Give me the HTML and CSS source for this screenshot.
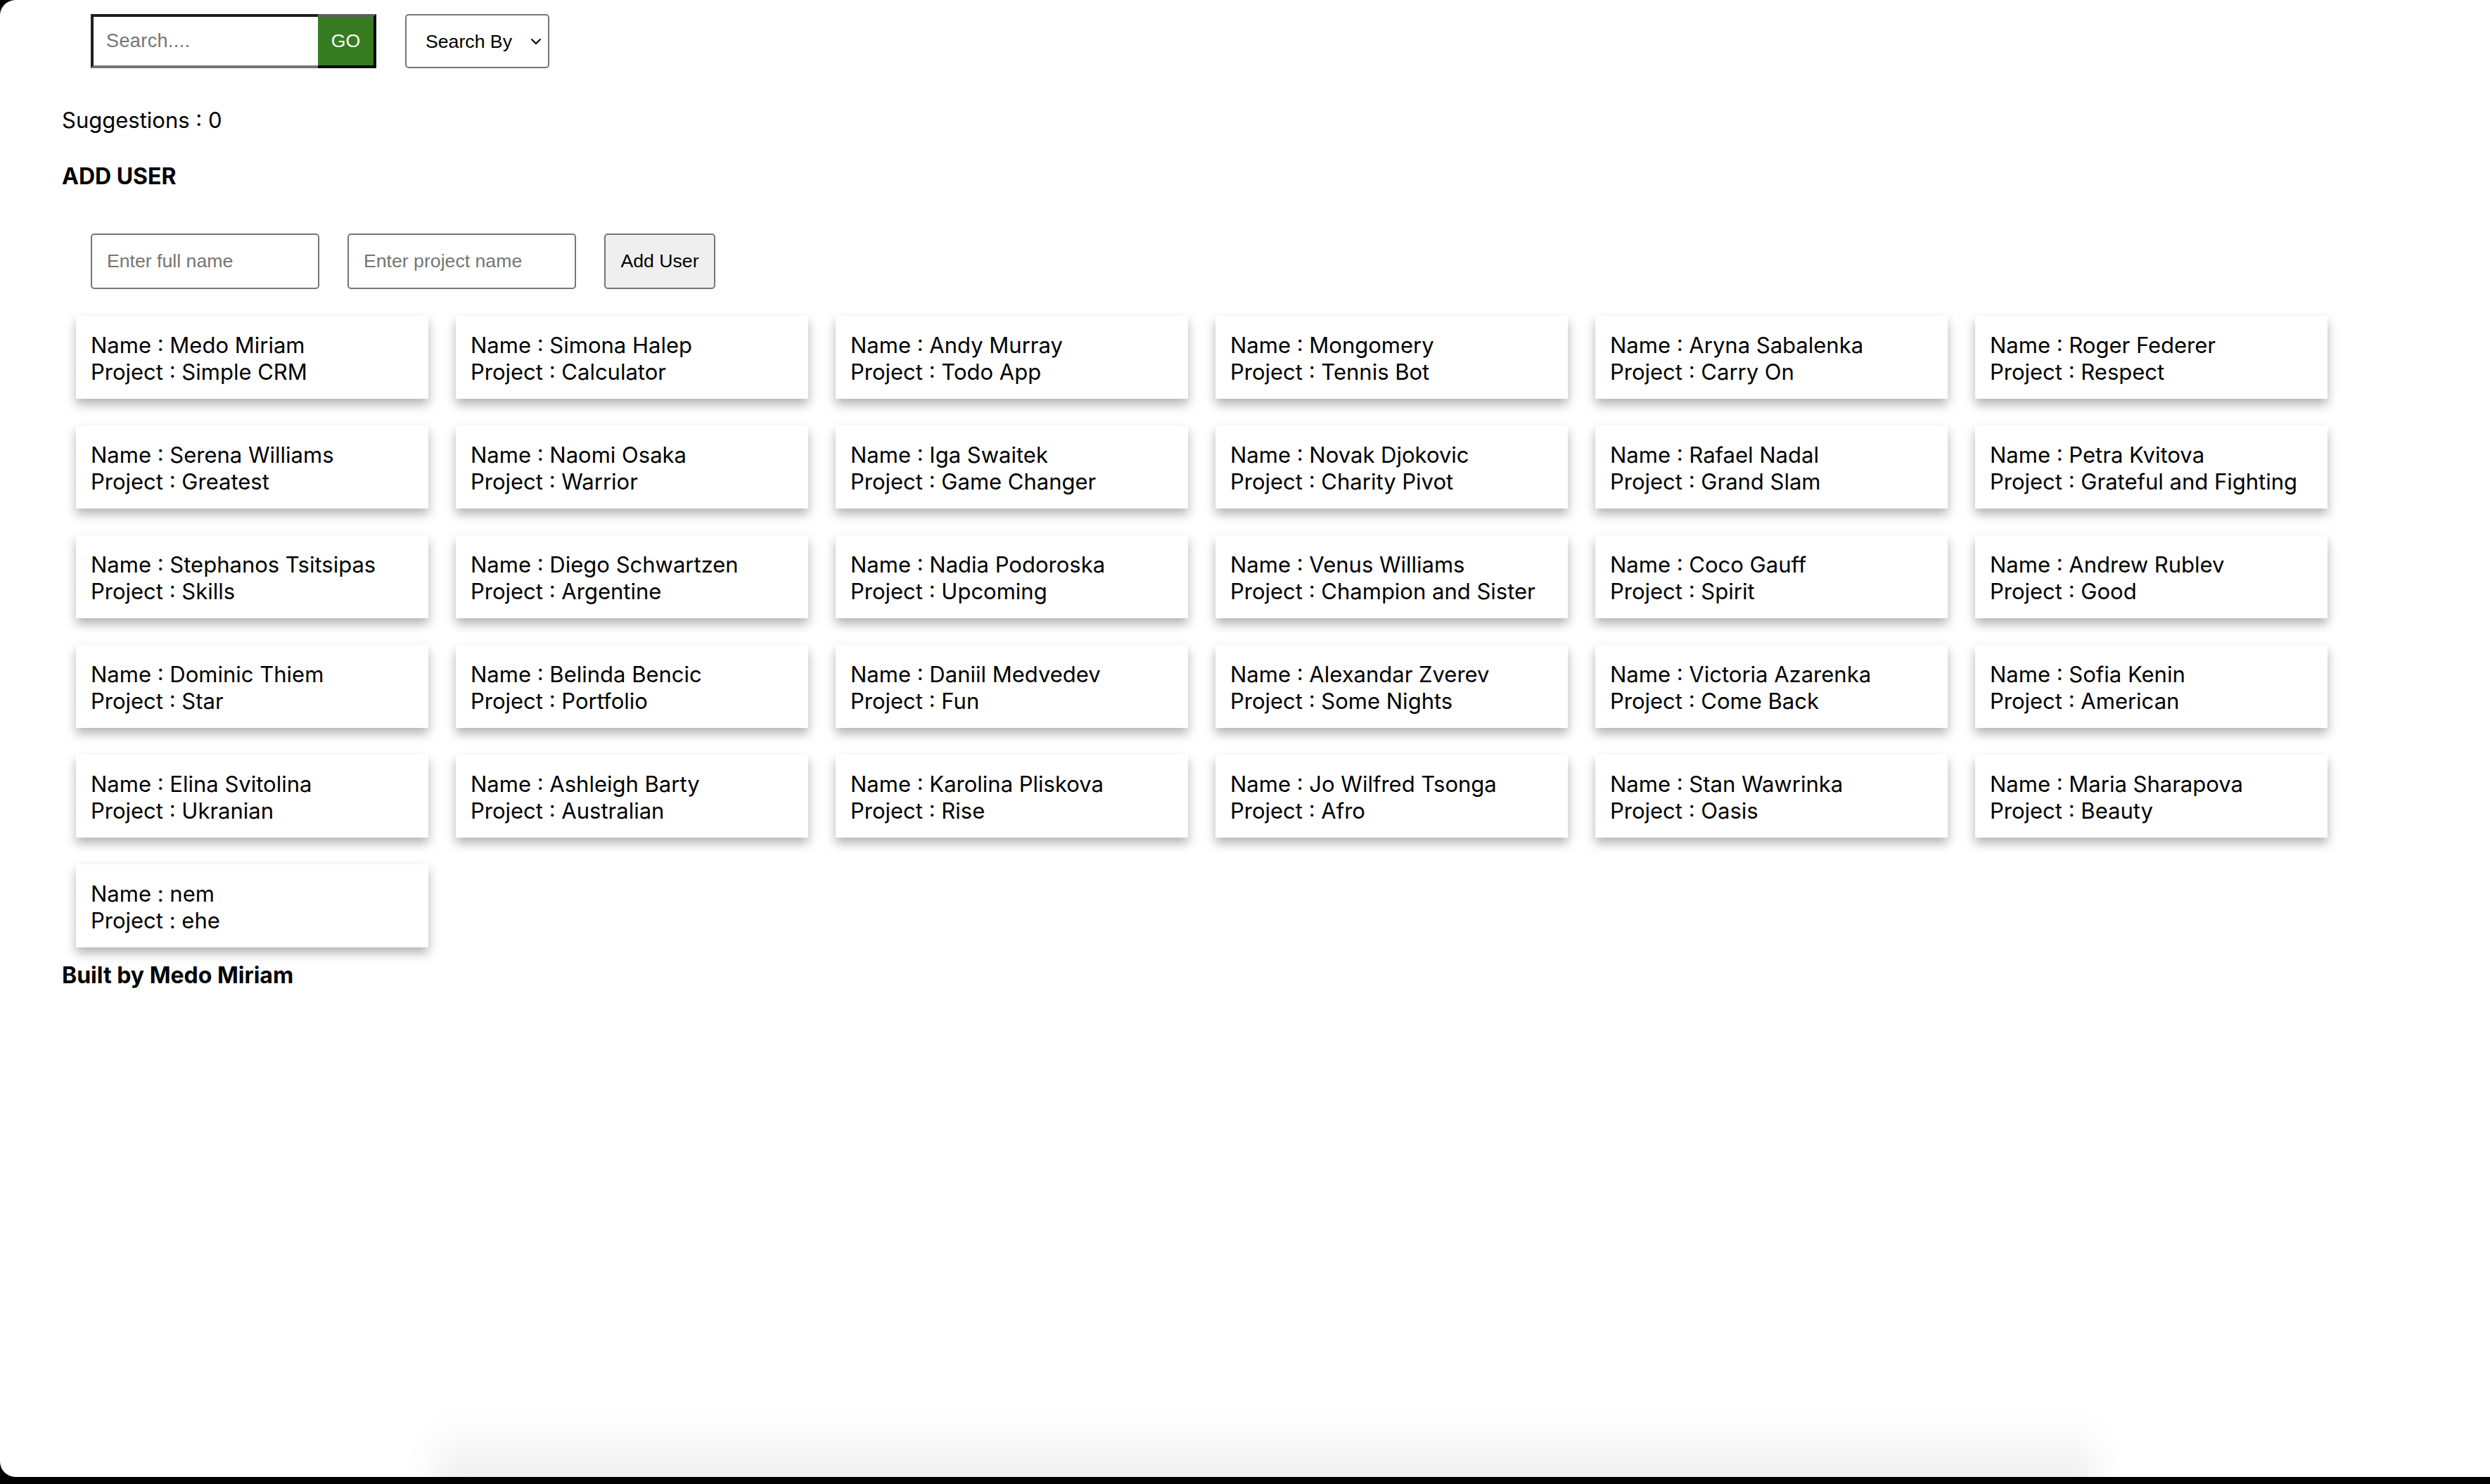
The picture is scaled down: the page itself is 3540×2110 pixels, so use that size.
FILE: index.html
```html
<!DOCTYPE html>
<html>
<head>
<meta charset="utf-8">
<title>Users</title>
<link rel="stylesheet" href="styles.css">
</head>
<body>
<div class="window">
  <div class="search-row">
    <div class="search-box">
      <input class="search-input" type="text" placeholder="Search....">
      <button class="go-btn">GO</button>
    </div>
    <div class="select-box">
      <span>Search By</span>
      <svg class="chev" width="16" height="10" viewBox="0 0 16 10"><path d="M1.5 1.5 L8 8 L14.5 1.5" fill="none" stroke="#000" stroke-width="2"/></svg>
    </div>
  </div>
  <p class="suggestions">Suggestions : 0</p>
  <h3 class="add-title">ADD USER</h3>
  <div class="add-form">
    <input class="field" type="text" placeholder="Enter full name">
    <input class="field" type="text" placeholder="Enter project name">
    <button class="add-btn">Add User</button>
  </div>
  <div class="cards">
    <div class="card"><div>Name : Medo Miriam</div><div>Project : Simple CRM</div></div>
    <div class="card"><div>Name : Simona Halep</div><div>Project : Calculator</div></div>
    <div class="card"><div>Name : Andy Murray</div><div>Project : Todo App</div></div>
    <div class="card"><div>Name : Mongomery</div><div>Project : Tennis Bot</div></div>
    <div class="card"><div>Name : Aryna Sabalenka</div><div>Project : Carry On</div></div>
    <div class="card"><div>Name : Roger Federer</div><div>Project : Respect</div></div>
    <div class="card"><div>Name : Serena Williams</div><div>Project : Greatest</div></div>
    <div class="card"><div>Name : Naomi Osaka</div><div>Project : Warrior</div></div>
    <div class="card"><div>Name : Iga Swaitek</div><div>Project : Game Changer</div></div>
    <div class="card"><div>Name : Novak Djokovic</div><div>Project : Charity Pivot</div></div>
    <div class="card"><div>Name : Rafael Nadal</div><div>Project : Grand Slam</div></div>
    <div class="card"><div>Name : Petra Kvitova</div><div>Project : Grateful and Fighting</div></div>
    <div class="card"><div>Name : Stephanos Tsitsipas</div><div>Project : Skills</div></div>
    <div class="card"><div>Name : Diego Schwartzen</div><div>Project : Argentine</div></div>
    <div class="card"><div>Name : Nadia Podoroska</div><div>Project : Upcoming</div></div>
    <div class="card"><div>Name : Venus Williams</div><div>Project : Champion and Sister</div></div>
    <div class="card"><div>Name : Coco Gauff</div><div>Project : Spirit</div></div>
    <div class="card"><div>Name : Andrew Rublev</div><div>Project : Good</div></div>
    <div class="card"><div>Name : Dominic Thiem</div><div>Project : Star</div></div>
    <div class="card"><div>Name : Belinda Bencic</div><div>Project : Portfolio</div></div>
    <div class="card"><div>Name : Daniil Medvedev</div><div>Project : Fun</div></div>
    <div class="card"><div>Name : Alexandar Zverev</div><div>Project : Some Nights</div></div>
    <div class="card"><div>Name : Victoria Azarenka</div><div>Project : Come Back</div></div>
    <div class="card"><div>Name : Sofia Kenin</div><div>Project : American</div></div>
    <div class="card"><div>Name : Elina Svitolina</div><div>Project : Ukranian</div></div>
    <div class="card"><div>Name : Ashleigh Barty</div><div>Project : Australian</div></div>
    <div class="card"><div>Name : Karolina Pliskova</div><div>Project : Rise</div></div>
    <div class="card"><div>Name : Jo Wilfred Tsonga</div><div>Project : Afro</div></div>
    <div class="card"><div>Name : Stan Wawrinka</div><div>Project : Oasis</div></div>
    <div class="card"><div>Name : Maria Sharapova</div><div>Project : Beauty</div></div>
    <div class="card"><div>Name : nem</div><div>Project : ehe</div></div>
  </div>
  <h3 class="footer">Built by Medo Miriam</h3>
  <div class="bottom-shade"></div>
</div>
</body>
</html>
```

FILE: styles.css
```css
html, body {
  margin: 0;
  padding: 0;
  background: #000;
}

.window {
  position: relative;
  box-sizing: border-box;
  height: 2100px;
  background: #fff;
  border-radius: 22px 0 0 22px;
  overflow: hidden;
  padding-top: 20px;
  font-family: Inter, "Noto Sans", sans-serif;
  font-size: 31px;
  line-height: 38px;
  color: #000;
}

.search-row {
  display: flex;
  align-items: flex-start;
  gap: 41px;
  padding-left: 129px;
}

.search-box {
  display: flex;
  height: 77px;
}

.search-input {
  box-sizing: border-box;
  width: 323px;
  height: 77px;
  margin: 0;
  padding: 0 0 0 18px;
  border-style: solid;
  border-width: 4px 0 4px 4px;
  border-color: #1f1f1f #1f1f1f #767676 #1f1f1f;
  font-family: "Liberation Sans", Arial, sans-serif;
  font-size: 27px;
  letter-spacing: 0.4px;
  outline: none;
  background: #fff;
}

.search-input::placeholder,
.field::placeholder {
  color: #757575;
}

.go-btn {
  box-sizing: border-box;
  width: 83px;
  height: 77px;
  margin: 0;
  padding: 0;
  background: #387c22;
  color: #fff;
  border-style: solid;
  border-width: 4px 4px 4px 0;
  border-color: #5e5e5e #000 #000 #000;
  font-family: "Liberation Sans", Arial, sans-serif;
  font-size: 26.67px;
}

.select-box {
  box-sizing: border-box;
  width: 205px;
  height: 77px;
  border: 2px solid #767676;
  border-radius: 5px;
  display: flex;
  align-items: center;
  justify-content: space-between;
  padding: 0 9px 0 27px;
  font-family: "Liberation Sans", Arial, sans-serif;
  font-size: 26.67px;
  line-height: 30px;
  color: #000;
}

.chev {
  display: block;
}

.suggestions {
  margin: 55px 0 0 88px;
}

.add-title {
  margin: 42px 0 0 88px;
  font-size: 32px;
  line-height: 38px;
  font-weight: 700;
}

.add-form {
  display: flex;
  gap: 40px;
  margin-top: 62px;
  padding-left: 129px;
}

.field {
  box-sizing: border-box;
  width: 325px;
  height: 79px;
  margin: 0;
  padding: 0 0 0 21px;
  border: 2px solid #767676;
  border-radius: 5px;
  font-family: "Liberation Sans", Arial, sans-serif;
  font-size: 26.67px;
  outline: none;
}

.add-btn {
  box-sizing: border-box;
  width: 158px;
  height: 79px;
  margin: 0;
  padding: 0;
  background: #efefef;
  border: 2px solid #767676;
  border-radius: 5px;
  color: #000;
  font-family: "Liberation Sans", Arial, sans-serif;
  font-size: 26.67px;
}

.cards {
  display: grid;
  grid-template-columns: repeat(6, 501px);
  column-gap: 39px;
  row-gap: 38px;
  margin-top: 38px;
  padding-left: 108px;
}

.card {
  box-sizing: border-box;
  height: 118px;
  padding: 23px 21px 19px;
  background: #fff;
  box-shadow: 0 8px 14px rgba(0, 0, 0, 0.3);
  white-space: nowrap;
}

.footer {
  margin: 21px 0 0 88px;
  font-size: 32px;
  line-height: 38px;
  font-weight: 700;
}

.bottom-shade {
  position: absolute;
  left: 620px;
  right: 560px;
  bottom: -30px;
  height: 110px;
  background: linear-gradient(to bottom, rgba(0, 0, 0, 0), rgba(0, 0, 0, 0.09));
  filter: blur(24px);
}
```
